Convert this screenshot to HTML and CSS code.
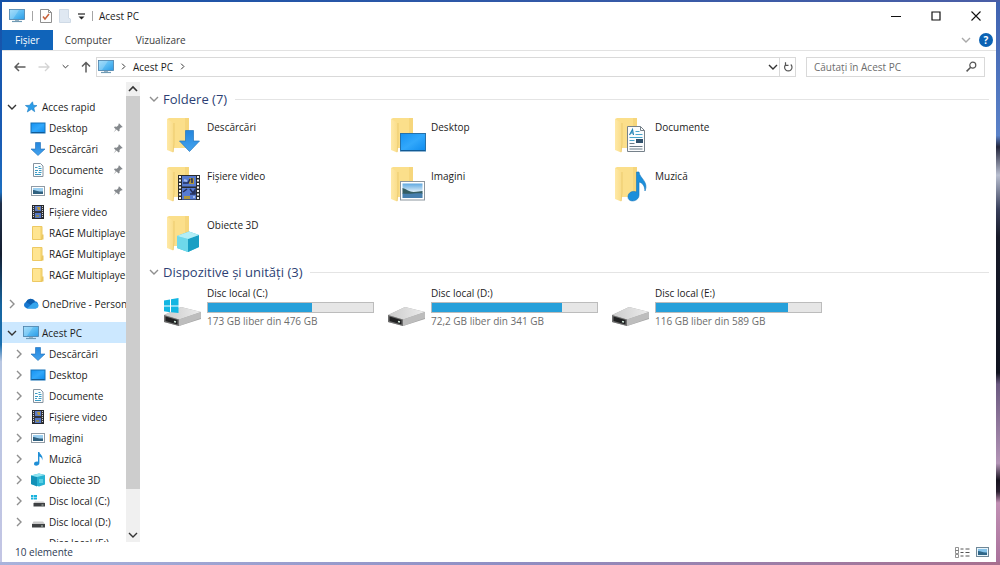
FILE: index.html
```html
<!DOCTYPE html>
<html lang="ro">
<head>
<meta charset="utf-8">
<title>Acest PC</title>
<link rel="stylesheet" href="styles.css">
</head>
<body>
<svg class="sprite" aria-hidden="true">
  <defs>
    <linearGradient id="gScreen" x1="0" y1="0" x2="1" y2="1"><stop offset="0" stop-color="#8fd6fb"/><stop offset=".5" stop-color="#5bbcf3"/><stop offset="1" stop-color="#2a9be6"/></linearGradient>
    <linearGradient id="gDesk" x1="0" y1="0" x2="1" y2="1"><stop offset="0" stop-color="#1592f2"/><stop offset=".5" stop-color="#32a8fb"/><stop offset="1" stop-color="#0d8bee"/></linearGradient>
    <linearGradient id="gFold" x1="0" y1="0" x2="1" y2="0"><stop offset="0" stop-color="#ffe9a6"/><stop offset="1" stop-color="#f9dc88"/></linearGradient>
    <linearGradient id="gSky" x1="0" y1="0" x2="0" y2="1"><stop offset="0" stop-color="#5fa8e0"/><stop offset=".6" stop-color="#e4f2fa"/></linearGradient>
    <linearGradient id="gTop" x1="0" y1="0" x2="1" y2="0"><stop offset="0" stop-color="#cbcbcb"/><stop offset="1" stop-color="#ececec"/></linearGradient>
    <linearGradient id="gDown" x1="0" y1="0" x2="0" y2="1"><stop offset="0" stop-color="#2486dd"/><stop offset="1" stop-color="#44a3ee"/></linearGradient>
    <symbol id="chev-down" viewBox="0 0 10 10"><path d="M1 3l4 4 4-4" fill="none" stroke="currentColor" stroke-width="1.4"/></symbol>
    <symbol id="chev-right" viewBox="0 0 10 10"><path d="M3 1l4 4-4 4" fill="none" stroke="currentColor" stroke-width="1.4"/></symbol>
    <symbol id="chev-up" viewBox="0 0 10 10"><path d="M1 7l4-4 4 4" fill="none" stroke="currentColor" stroke-width="1.6"/></symbol>
    <symbol id="pc" viewBox="0 0 16 14"><rect x=".5" y=".5" width="15" height="10" fill="url(#gScreen)" stroke="#4a7fa8" stroke-width=".8"/><path d="M1 1h9L4 10H1z" fill="#fff" opacity=".2"/><path d="M6 11h4v1.500H6z" fill="#9bb4c4"/><path d="M3 12.500h10" stroke="#6f9ab4" stroke-width="1.200"/></symbol>
    <symbol id="star" viewBox="0 0 16 14"><path d="M9.500 1.800l.8 3.500 3.700.3-3.200 2.200.9 3.900-3.300-2.400L4.300 12l1.200-4.200L2.400 5.500l4.100-.2z" fill="#2c9de8" stroke="#1b7cc4" stroke-width=".6"/></symbol>
    <symbol id="desk" viewBox="0 0 16 14"><rect x="1" y="2" width="14" height="10" fill="url(#gDesk)" stroke="#1672b8"/><path d="M1.500 11.500h13" stroke="#125b96"/></symbol>
    <symbol id="down" viewBox="0 0 16 14"><path d="M5.500.5h5V7H15l-7 6.500L1 7h4.500z" fill="url(#gDown)" stroke="#1b6db8" stroke-width=".6"/></symbol>
    <symbol id="doc" viewBox="0 0 16 14"><path d="M3.500.5h7l2.500 2.500v10.500H3.500z" fill="#fbfdfe" stroke="#8593a0"/><path d="M5 4.500h2.500M8.500 3.500h2M8.500 5.500h3M5 7.500h3M9 7.500h2.500M5 9.500h2M8.500 9.500h3M5 11.500h6" stroke="#3b9bc4"/></symbol>
    <symbol id="pic" viewBox="0 0 16 14"><rect x="1.500" y="2.500" width="13" height="9" fill="#fff" stroke="#909ba5"/><rect x="3" y="4" width="10" height="6" fill="#9ccff0"/><path d="M3 6c3 0 4 2 10 1.500V10H3z" fill="#31617f"/></symbol>
    <symbol id="film" viewBox="0 0 16 14"><rect x="2.500" y=".5" width="11" height="13" fill="#34363a" stroke="#25272b"/><path d="M3.500 1v12M12.500 1v12" stroke="#d5d5d5" stroke-dasharray="1 1"/><path d="M5 1h6v5H5z" fill="#5d7cc8"/><path d="M5 8h6v5H5z" fill="#5377c8"/><path d="M7 2h3v3H8z" fill="#b3953c"/><path d="M6 10h3v2H6z" fill="#8c8a5c"/></symbol>
    <symbol id="fold" viewBox="0 0 16 14"><path d="M2.500.5h9.500v13H2.500z" fill="#f8da7b" stroke="#edc963"/><path d="M3 1h7v12H3z" fill="#ffe591"/><path d="M12 8.500h1.500v5H11z" fill="#eac65f"/></symbol>
    <symbol id="cloud" viewBox="0 0 16 12"><path d="M4 10.500a3.500 3.500 0 0 1-.6-6.800A5 5 0 0 1 12 3.300a3.700 3.700 0 0 1 .6 7.200z" fill="#1878d0"/><path d="M3 4a5 5 0 0 1 9-.7L8 7z" fill="#0e5fae"/><path d="M4 10.500l6-5.500c3-1.500 5.500.4 5.500 2.500 0 1.700-1.300 3-3 3z" fill="#35a5ed"/></symbol>
    <symbol id="note" viewBox="0 0 16 14"><path d="M8 0h1.400c.3 2.500 4.600 4 2.600 8.500.3-2.500-1-3.600-2.600-4V11c0 3-5.400 3.700-5.400 1 0-2 2.500-2.800 4-2.200z" fill="#218fd6"/></symbol>
    <symbol id="cube" viewBox="0 0 16 14"><path d="M1 2.500L9 .5l6 1.500v9.500l-6 2-8-2.500z" fill="#27b2d3"/><path d="M1 2.500l6 1.500v9.500L1 11z" fill="#1291b8"/><path d="M1 2.500L9 .5l6 1.500-8 2z" fill="#8fe3f1"/><path d="M9 6h4v4H9z" fill="#58cfe4"/></symbol>
    <symbol id="hdd" viewBox="0 0 16 14"><path d="M3.500 6.500h9.500l2 2.500H2z" fill="#c9c9c9"/><path d="M2 9h13v3.500H2z" fill="#3f4143"/><path d="M11 11h2" stroke="#b9c7bd"/></symbol>
    <symbol id="hddwin" viewBox="0 0 16 14"><path d="M1 1h2.500v2H1zM4 1h3v2H4zM1 3.500h2.500v2H1zM4 3.500h3v2H4z" fill="#18b2dd"/><path d="M5 7.500h8.500l1.500 1.500H3.500z" fill="#c9c9c9"/><path d="M3.500 9H15v3.500H3.500z" fill="#3f4143"/><path d="M11.500 11h2" stroke="#b9c7bd"/></symbol>
    <symbol id="pin" viewBox="0 0 10 10"><path d="M6 .3L9.700 4l-1 .4-.5-.2-1.700 1.700.1 1.900-1 .8-2.100-2.100L.5 9.500l2.300-3.200L1 4.500l.8-.9 2 .1 1.800-1.800-.2-.7z" fill="#85898d"/></symbol>
    <symbol id="bigfold" viewBox="0 0 40 40"><path d="M4 4l2-1h20v30H10z" fill="#fbdf8b"/><path d="M22 3h4v30h-4z" fill="#f6d67c"/><path d="M4 4l7 4v21l-.8 8.500L4 35z" fill="url(#gFold)"/><path d="M11 8v21l-.8 8" fill="none" stroke="#e7c363" stroke-width=".7"/></symbol>
    <symbol id="b-down" viewBox="0 0 40 40"><use href="#bigfold"/><path d="M22.500 15.500h8v10.500h6L26.500 36.500 16.500 26h6z" fill="url(#gDown)" stroke="#2375bd" stroke-width=".7"/></symbol>
    <symbol id="b-desk" viewBox="0 0 40 40"><use href="#bigfold"/><rect x="13.500" y="18.500" width="25" height="17.500" fill="url(#gDesk)" stroke="#2671a9"/><path d="M14 35.500h24" stroke="#115a95"/></symbol>
    <symbol id="b-doc" viewBox="0 0 40 40"><use href="#bigfold"/><path d="M16.500 11.500h13l4 4v21h-17z" fill="#fbfcfd" stroke="#76818a"/><path d="M29.500 11.500v4h4" fill="none" stroke="#76818a"/><path d="M18.500 20l3-5.500 1 5.500M19.500 18h3" fill="none" stroke="#2484b6" stroke-width="1.200"/><path d="M24.500 16.500h4M24.500 19.500h7M18.500 22.500h13M18.500 25.500h5" stroke="#4aa5cb"/><rect x="25" y="24" width="7" height="4" fill="#30506b"/><path d="M18.500 28.500h5M18.500 31.500h13M18.500 34h13" stroke="#6b7c88"/></symbol>
    <symbol id="b-film" viewBox="0 0 40 40"><use href="#bigfold"/><rect x="15" y="11" width="22" height="25" fill="#292b2d"/><path d="M17 12v23M35 12v23" stroke="#f5f5f5" stroke-width="2" stroke-dasharray="2 1.500"/><path d="M19 12h14v10.500H19zM19 24h14v11.500H19z" fill="#577bd0"/><path d="M26 14h5v6h-5zM21 32h6v3h-6z" fill="#ae963c"/><path d="M28 15h1v4M20 19h5l2-4M20 28l4-3M27 25l3 4 2-3v4h-5" fill="none" stroke="#25305b" stroke-width="1.500"/><path d="M21 16l3 1M30 33h2" stroke="#a3bbed" stroke-width="2"/></symbol>
    <symbol id="b-pic" viewBox="0 0 40 40"><use href="#bigfold"/><rect x="13.500" y="17.500" width="24" height="18.500" fill="#fff" stroke="#8c969e"/><rect x="15.500" y="19.500" width="20" height="14.500" fill="url(#gSky)"/><path d="M15.500 24c4 1 7 4 11 4s6-1 9-1v3h-20z" fill="#355d62"/><path d="M15.500 29.500c8 1 14-1 20 0V34h-20z" fill="#477fae"/></symbol>
    <symbol id="b-note" viewBox="0 0 40 40"><use href="#bigfold"/><path d="M25.500 8h2.500c.5 6 10 10 6 19-.4-5-2-8-6-9v13c0 7-11 8-11 2 0-5 5-6.500 8.500-5z" fill="#1c8fdb" stroke="#1476ba" stroke-width=".6"/></symbol>
    <symbol id="b-cube" viewBox="0 0 40 40"><use href="#bigfold"/><path d="M14 23l12-4.500L36 22v12l-11 5-11-4z" fill="#45c4dd"/><path d="M14 23l11 3v13l-11-4z" fill="#6ed8ea"/><path d="M25 26l11-4v12l-11 5z" fill="#199fc4"/><path d="M14 23l12-4.500L36 22l-11 4z" fill="#b3eef6"/></symbol>
    <symbol id="b-hdd" viewBox="0 0 40 30"><path d="M1 17L18 9l20 5v7L16 28 1 24z" fill="#a6a6a6"/><path d="M1 17L18 9l20 5-22 7.500z" fill="url(#gTop)"/><path d="M16 21.500L38 14v6L16 28z" fill="#bdbdbd"/><path d="M1 17l15 4.500V28L1 24z" fill="#6f6f6f"/><path d="M2.500 18.500L14.500 22v4.500L2.500 23z" fill="#202122"/><path d="M11 23.500l2 .5" stroke="#d8efe0" stroke-width="1.500"/></symbol>
    <symbol id="b-hddwin" viewBox="0 0 40 30"><use href="#b-hdd"/><path d="M1 2.500l6-1v6H1zM8 1.300L15.500 0v7.500H8zM1 8.500h6v5.800l-6-1zM8 8.500h7.500V15L8 14.300z" fill="#12b6e2"/></symbol>
  </defs>
</svg>

<main class="window">
  <header class="titlebar">
    <div class="quick">
      <svg class="ico-pc"><use href="#pc"/></svg>
      <span class="sep"></span>
      <button class="plain" aria-label="Proprietăți"><svg width="12" height="14" viewBox="0 0 12 14"><path d="M.5.5h8l3 3v10H.5z" fill="#fdfdfd" stroke="#8f8f8f"/><path d="M8.500.5v3h3" fill="none" stroke="#8f8f8f"/><path d="M3 7.500l2 2.500 4-5" fill="none" stroke="#c65f38" stroke-width="1.500"/></svg></button>
      <button class="plain" aria-label="Folder nou"><svg width="12" height="14" viewBox="0 0 12 14"><path d="M.5.5h9v8.500l2 1v3.500H.5z" fill="#dfe8f2" stroke="#cfdae6"/></svg></button>
      <button class="plain" aria-label="Particularizare"><svg width="7" height="7" viewBox="0 0 7 7"><path d="M0 1h7" stroke="#222" stroke-width="1.200"/><path d="M.5 3.500h6l-3 3z" fill="#222"/></svg></button>
      <span class="sep"></span>
    </div>
    <h1 class="caption">Acest PC</h1>
    <div class="controls">
      <button class="plain ctl" aria-label="Minimizare"><svg width="10" height="10" viewBox="0 0 10 10"><path d="M0 5.500h10" stroke="#111"/></svg></button>
      <button class="plain ctl" aria-label="Maximizare"><svg width="10" height="10" viewBox="0 0 10 10"><path d="M1 1h8v8H1z" fill="none" stroke="#111" stroke-width="1.200"/></svg></button>
      <button class="plain ctl" aria-label="Închidere"><svg width="10" height="10" viewBox="0 0 10 10"><path d="M.5.5l9 9M9.500.5l-9 9" stroke="#111" stroke-width="1.100"/></svg></button>
    </div>
  </header>

  <nav class="ribbon">
    <button class="tab tab-file">Fișier</button>
    <button class="tab">Computer</button>
    <button class="tab">Vizualizare</button>
    <div class="ribbon-end">
      <button class="plain" aria-label="Extindere panglică"><svg class="chev pale"><use href="#chev-down"/></svg></button>
      <button class="plain help" aria-label="Ajutor">?</button>
    </div>
  </nav>

  <div class="navbar">
    <div class="arrows">
      <button class="plain" aria-label="Înapoi"><svg width="12" height="10" viewBox="0 0 12 10"><path d="M11.500 5H1.500M5 1L1 5l4 4" fill="none" stroke="#5c5c5c" stroke-width="1.500"/></svg></button>
      <button class="plain" aria-label="Înainte"><svg width="12" height="10" viewBox="0 0 12 10"><path d="M.5 5h10M7 1l4 4-4 4" fill="none" stroke="#d4d4d4" stroke-width="1.300"/></svg></button>
      <button class="plain" aria-label="Recente"><svg class="chev tiny"><use href="#chev-down"/></svg></button>
      <button class="plain" aria-label="Sus"><svg width="10" height="12" viewBox="0 0 10 12"><path d="M5 11.500v-10M1 5.500l4-4 4 4" fill="none" stroke="#5c5c5c" stroke-width="1.500"/></svg></button>
    </div>
    <div class="address">
      <svg class="ico-pc"><use href="#pc"/></svg>
      <svg class="chev tiny"><use href="#chev-right"/></svg>
      <a href="#">Acest PC</a>
      <svg class="chev tiny"><use href="#chev-right"/></svg>
      <div class="address-end">
        <button class="plain" aria-label="Locații anterioare"><svg class="chev bold"><use href="#chev-down"/></svg></button>
        <button class="plain refresh" aria-label="Reîmprospătare"><svg width="10" height="10" viewBox="0 0 10 10"><path d="M7.800 2.500a3.700 3.700 0 1 1-5 0M2.500.3v3h3" fill="none" stroke="#555" stroke-width="1.200"/></svg></button>
      </div>
    </div>
    <label class="search">
      <input type="search" placeholder="Căutați în Acest PC" aria-label="Căutați în Acest PC">
      <svg width="11" height="11" viewBox="0 0 11 11"><circle cx="6.800" cy="4.200" r="3" fill="none" stroke="#555" stroke-width="1.200"/><path d="M4.700 6.300L.6 10.400" stroke="#555" stroke-width="1.500"/></svg>
    </label>
  </div>

  <div class="body">
    <aside class="side">
      <div class="tree">
        <section class="group">
          <a class="row" href="#"><svg class="chev dark"><use href="#chev-down"/></svg><svg class="ico"><use href="#star"/></svg><span>Acces rapid</span></a>
          <div class="kids">
            <a class="row" href="#"><svg class="ico"><use href="#desk"/></svg><span>Desktop</span><svg class="pin"><use href="#pin"/></svg></a>
            <a class="row" href="#"><svg class="ico"><use href="#down"/></svg><span>Descărcări</span><svg class="pin"><use href="#pin"/></svg></a>
            <a class="row" href="#"><svg class="ico"><use href="#doc"/></svg><span>Documente</span><svg class="pin"><use href="#pin"/></svg></a>
            <a class="row" href="#"><svg class="ico"><use href="#pic"/></svg><span>Imagini</span><svg class="pin"><use href="#pin"/></svg></a>
            <a class="row" href="#"><svg class="ico"><use href="#film"/></svg><span>Fișiere video</span></a>
            <a class="row" href="#"><svg class="ico"><use href="#fold"/></svg><span>RAGE Multiplayer</span></a>
            <a class="row" href="#"><svg class="ico"><use href="#fold"/></svg><span>RAGE Multiplayer</span></a>
            <a class="row" href="#"><svg class="ico"><use href="#fold"/></svg><span>RAGE Multiplayer</span></a>
          </div>
        </section>
        <section class="group">
          <a class="row" href="#"><svg class="chev"><use href="#chev-right"/></svg><svg class="ico"><use href="#cloud"/></svg><span>OneDrive - Personal</span></a>
        </section>
        <section class="group">
          <a class="row selected" href="#"><svg class="chev dark"><use href="#chev-down"/></svg><svg class="ico"><use href="#pc"/></svg><span>Acest PC</span></a>
          <div class="kids">
            <a class="row" href="#"><svg class="chev"><use href="#chev-right"/></svg><svg class="ico"><use href="#down"/></svg><span>Descărcări</span></a>
            <a class="row" href="#"><svg class="chev"><use href="#chev-right"/></svg><svg class="ico"><use href="#desk"/></svg><span>Desktop</span></a>
            <a class="row" href="#"><svg class="chev"><use href="#chev-right"/></svg><svg class="ico"><use href="#doc"/></svg><span>Documente</span></a>
            <a class="row" href="#"><svg class="chev"><use href="#chev-right"/></svg><svg class="ico"><use href="#film"/></svg><span>Fișiere video</span></a>
            <a class="row" href="#"><svg class="chev"><use href="#chev-right"/></svg><svg class="ico"><use href="#pic"/></svg><span>Imagini</span></a>
            <a class="row" href="#"><svg class="chev"><use href="#chev-right"/></svg><svg class="ico"><use href="#note"/></svg><span>Muzică</span></a>
            <a class="row" href="#"><svg class="chev"><use href="#chev-right"/></svg><svg class="ico"><use href="#cube"/></svg><span>Obiecte 3D</span></a>
            <a class="row" href="#"><svg class="chev"><use href="#chev-right"/></svg><svg class="ico"><use href="#hddwin"/></svg><span>Disc local (C:)</span></a>
            <a class="row" href="#"><svg class="chev"><use href="#chev-right"/></svg><svg class="ico"><use href="#hdd"/></svg><span>Disc local (D:)</span></a>
            <a class="row last" href="#"><span>Disc local (E:)</span></a>
          </div>
        </section>
      </div>
      <div class="scroll">
        <button class="plain" aria-label="Derulare în sus"><svg class="chev dark"><use href="#chev-up"/></svg></button>
        <div class="track"><div class="thumb"></div></div>
        <button class="plain" aria-label="Derulare în jos"><svg class="chev dark"><use href="#chev-down"/></svg></button>
      </div>
    </aside>

    <div class="content">
      <section>
        <h2 class="heading"><svg class="chev"><use href="#chev-down"/></svg>Foldere (7)</h2>
        <div class="grid folders">
          <a class="item" href="#"><svg class="big"><use href="#b-down"/></svg><span>Descărcări</span></a>
          <a class="item" href="#"><svg class="big"><use href="#b-desk"/></svg><span>Desktop</span></a>
          <a class="item" href="#"><svg class="big"><use href="#b-doc"/></svg><span>Documente</span></a>
          <a class="item" href="#"><svg class="big"><use href="#b-film"/></svg><span>Fișiere video</span></a>
          <a class="item" href="#"><svg class="big"><use href="#b-pic"/></svg><span>Imagini</span></a>
          <a class="item" href="#"><svg class="big"><use href="#b-note"/></svg><span>Muzică</span></a>
          <a class="item" href="#"><svg class="big"><use href="#b-cube"/></svg><span>Obiecte 3D</span></a>
        </div>
      </section>
      <section>
        <h2 class="heading"><svg class="chev"><use href="#chev-down"/></svg>Dispozitive și unități (3)</h2>
        <div class="grid drives">
          <a class="drive" href="#"><svg class="disk"><use href="#b-hddwin"/></svg><div class="info"><span>Disc local (C:)</span><div class="bar"><div class="fill" style="width:63%"></div></div><span class="free">173 GB liber din 476 GB</span></div></a>
          <a class="drive" href="#"><svg class="disk"><use href="#b-hdd"/></svg><div class="info"><span>Disc local (D:)</span><div class="bar"><div class="fill" style="width:79%"></div></div><span class="free">72,2 GB liber din 341 GB</span></div></a>
          <a class="drive" href="#"><svg class="disk"><use href="#b-hdd"/></svg><div class="info"><span>Disc local (E:)</span><div class="bar"><div class="fill" style="width:80%"></div></div><span class="free">116 GB liber din 589 GB</span></div></a>
        </div>
      </section>
    </div>
  </div>

  <footer class="status">
    <span>10 elemente</span>
    <div class="views">
      <button class="plain" aria-label="Detalii"><svg width="15" height="11" viewBox="0 0 15 11"><path d="M.5.500h3v3h-3zM.5 3.500h3v3h-3zM.5 7.500h3v3h-3z" fill="none" stroke="#777" stroke-width=".8"/><path d="M5.500 2h3M10.500 2h4M5.500 5.500h3M10.500 5.500h4M5.500 9h3M10.500 9h4" stroke="#555"/></svg></button>
      <button class="plain" aria-label="Pictograme mari"><svg width="13" height="10" viewBox="0 0 13 10"><rect x=".5" y=".5" width="12" height="9" fill="#e8f4fb" stroke="#6f8797"/><rect x="2" y="2" width="9" height="6" fill="#85c3ea"/><path d="M2 4c3 0 5 2 9 1.500V8H2z" fill="#2f6688"/></svg></button>
    </div>
  </footer>
</main>
</body>
</html>
```
FILE: styles.css
```css
* { box-sizing: border-box; }

body {
  margin: 0;
  height: 100vh;
  display: flex;
  padding: 2px 4px 3px 2px;
  overflow: hidden;
  font: 10px/14px "Open Sans", "Noto Sans", sans-serif;
  color: #1c1c1c;
  background:
    linear-gradient(90deg, #1552a8, #4a5ea6) top / 100% 2px no-repeat,
    linear-gradient(90deg, #a9b3dc, #8f8fc4 50%, #a8708f) bottom / 100% 3px no-repeat,
    linear-gradient(#1552a8, #1a5cb4 25%, #1d6fc0 34%, #20304a 36%, #131d30 45%, #1665a0 54%, #1a70b0 61%, #b9c7e2 64%, #c3c5e4) left / 2px 100% no-repeat,
    linear-gradient(#3f62b0, #5b82c8 24%, #23263c 26%, #b9bfd0 31%, #39405c 37%, #171a28 42%, #101320 66%, #6b5a80 68%, #b394b6 82%, #16121e 85%, #2a2030 87%, #c290b4 89%, #a8709a) right / 4px 100% no-repeat;
}

.sprite { position: absolute; width: 0; height: 0; }
svg { flex: none; display: block; }
a { color: inherit; text-decoration: none; }

.plain {
  display: flex;
  align-items: center;
  justify-content: center;
  padding: 0;
  border: 0;
  background: none;
  font: inherit;
  color: inherit;
}

.window {
  flex: 1;
  min-width: 0;
  display: flex;
  flex-direction: column;
  background: #fff;
}

.titlebar { display: flex; align-items: center; height: 28px; padding-left: 7px; }
.quick { display: flex; align-items: center; gap: 7px; }
.sep { width: 1px; height: 10px; background: #a5a5a5; }
.caption { margin: 0 0 0 6px; font-size: 10px; font-weight: 400; }
.controls { display: flex; margin-left: auto; }
.ctl { width: 40px; height: 28px; }
.ico-pc { width: 16px; height: 14px; }

.ribbon { display: flex; height: 21px; border-bottom: 1px solid #e2e2e2; }
.tab {
  padding: 0 12px;
  border: 0;
  background: none;
  font: inherit;
  color: #3c3c3c;
}
.tab-file { padding: 0 13px; background: #1064ba; color: #fff; }
.ribbon-end { display: flex; align-items: center; gap: 8px; margin-left: auto; padding-right: 3px; }
.help {
  width: 14px;
  height: 14px;
  border-radius: 50%;
  background: #0b62b4;
  color: #fff;
  font-size: 10px;
  font-weight: 700;
}

.chev { width: 10px; height: 10px; color: #8f8f8f; }
.chev.pale { color: #a9a9a9; }
.chev.tiny { width: 7px; height: 7px; color: #333; }
.chev.bold, .chev.dark { color: #333; }

.navbar { display: flex; align-items: center; height: 31px; padding: 0 11px 0 12px; }
.arrows { display: flex; align-items: center; gap: 12px; margin-right: 5px; }
.address {
  flex: 1;
  display: flex;
  align-items: center;
  gap: 6px;
  height: 20px;
  padding-left: 1px;
  border: 1px solid #d9d9d9;
}
.address-end { display: flex; align-items: center; gap: 1px; margin-left: auto; }
.refresh { width: 16px; height: 18px; border-left: 1px solid #d9d9d9; }
.search {
  display: flex;
  align-items: center;
  width: 179px;
  height: 20px;
  margin-left: 10px;
  padding: 0 7px;
  border: 1px solid #d9d9d9;
}
.search input {
  flex: 1;
  min-width: 0;
  padding: 0;
  border: 0;
  outline: 0;
  background: none;
  font: inherit;
}
.search input::placeholder { color: #6d6d6d; opacity: 1; }

.body { flex: 1; min-height: 0; display: flex; }
.side { width: 138px; display: flex; }
.tree { flex: 1; min-width: 0; overflow: hidden; padding-top: 14px; }
.group { margin-bottom: 8px; }
.row {
  display: flex;
  align-items: center;
  gap: 3px;
  height: 21px;
  padding-left: 5px;
  white-space: nowrap;
}
.row .ico { width: 16px; height: 14px; }
.row .chev { margin-right: 3px; }
.selected { background: #cce8ff; }
.kids .row { padding-left: 12px; }
.kids .ico:first-child { margin-left: 16px; }
.last span { margin-left: 35px; }
.pin { width: 10px; height: 10px; margin: 0 3px 0 auto; }

.scroll { width: 14px; display: flex; flex-direction: column; background: #f0f0f0; }
.scroll .plain { height: 14px; }
.track { flex: 1; }
.thumb { height: 91%; background: #cdcdcd; }

.content { flex: 1; min-width: 0; padding: 8px 7px 0 9px; }
.heading {
  display: flex;
  align-items: center;
  gap: 4px;
  margin: 0;
  font-size: 13px;
  line-height: 18px;
  font-weight: 400;
  color: #2d3f74;
}
.heading::after { content: ""; flex: 1; height: 1px; margin-left: 4px; background: #e4e4e4; }
.grid { display: grid; grid-template-columns: repeat(auto-fill, 224px); padding: 7px 0 0 14px; }
.folders { padding-bottom: 1px; }
.drives { padding-top: 5px; }
.item { display: flex; gap: 4px; height: 49px; }
.item span { padding-top: 5px; }
.big { width: 40px; height: 40px; }
.drive { display: flex; gap: 4px; }
.disk { width: 40px; height: 30px; margin-top: 12px; }
.info { display: flex; flex-direction: column; width: 167px; }
.bar { height: 11px; margin: 2px 0 1px; border: 1px solid #bcbcbc; background: #e6e6e6; }
.fill { height: 100%; background: #26a0da; }
.free { color: #6d6d6d; }

.status { display: flex; align-items: center; justify-content: space-between; height: 20px; padding: 0 7px 0 13px; color: #2e3a55; }
.views { display: flex; align-items: center; gap: 6px; }
```
